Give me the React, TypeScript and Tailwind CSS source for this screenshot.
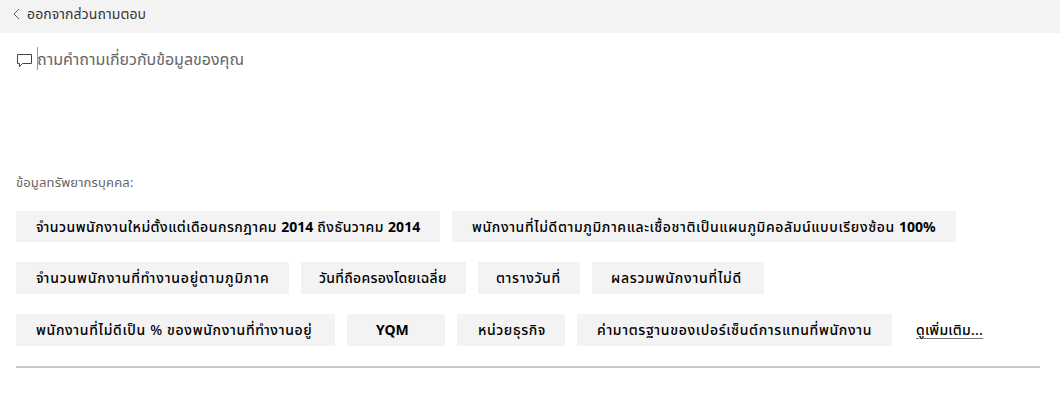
type ChipData = { label: string; box: string };

const rows: { height: string; chips: ChipData[] }[] = [
  {
    height: 'h-[31px] mb-5',
    chips: [
      { label: 'จำนวนพนักงานใหม่ตั้งแต่เดือนกรกฎาคม 2014 ถึงธันวาคม 2014', box: 'w-[424px] pl-5 tracking-[0.48px]' },
      { label: 'พนักงานที่ไม่ดีตามภูมิภาคและเชื้อชาติเป็นแผนภูมิคอลัมน์แบบเรียงซ้อน 100%', box: 'w-[504px] pl-5 tracking-[0.61px]' },
    ],
  },
  {
    height: 'h-8 mb-5',
    chips: [
      { label: 'จำนวนพนักงานที่ทำงานอยู่ตามภูมิภาค', box: 'w-[273px] pb-0.5 pl-5 tracking-[0.83px]' },
      { label: 'วันที่ถือครองโดยเฉลี่ย', box: 'w-[165px] pb-0.5 pl-[18px] tracking-[0.28px]' },
      { label: 'ตารางวันที่', box: 'w-[102px] pb-0.5 pl-[18px] tracking-[0.65px]' },
      { label: 'ผลรวมพนักงานที่ไม่ดี', box: 'w-[172px] pb-0.5 pl-[19px] tracking-[0.75px]' },
    ],
  },
  {
    height: 'h-8',
    chips: [
      { label: 'พนักงานที่ไม่ดีเป็น % ของพนักงานที่ทำงานอยู่', box: 'w-[319px] pb-0.5 pl-5 tracking-[0.66px]' },
      { label: 'YQM', box: 'w-[98px] pb-0.5 pl-[29px]' },
      { label: 'หน่วยธุรกิจ', box: 'w-[108px] pb-0.5 pl-[21px] tracking-[0.6px]' },
      { label: 'ค่ามาตรฐานของเปอร์เซ็นต์การแทนที่พนักงาน', box: 'w-[315px] pb-0.5 pl-5 tracking-[0.66px]' },
    ],
  },
];

function Chip({ label, box }: ChipData) {
  const parts = label.split(/(2014|100%|YQM)/);
  return (
    <button className={`flex shrink-0 items-center bg-[#f3f3f3] text-left whitespace-pre ${box}`}>
      <span>
        {parts.map((part, i) => (i % 2 ? <b key={i} className="font-bold tracking-normal">{part}</b> : part))}
      </span>
    </button>
  );
}

export default function App() {
  return (
    <div className="h-[400px] w-[1060px] overflow-hidden bg-white font-['Noto_Sans','Noto_Sans_Thai',sans-serif]">
      <header className="flex h-[33px] items-center bg-[#f3f3f3] pb-1.5 pl-3 text-[14px] text-[#333]">
        <svg className="mr-[7px] h-3 w-2" viewBox="0 0 8 12" fill="none" stroke="#666">
          <path d="M7 1 2 6l5 5" />
        </svg>
        <span className="whitespace-nowrap tracking-[0.1px]">ออกจากส่วนถามตอบ</span>
      </header>
      <main className="pl-4">
        <div className="flex h-[53px] items-center text-[16px] text-[#666]">
          <svg className="mt-[3px] h-4 w-[17px]" viewBox="0 0 17 16" fill="none" stroke="#444">
            <path d="M1.500 1.500h14v9H6.500l-3 3v-3h-2z" />
          </svg>
          <span className="ml-1 mb-0.5 h-[23px] w-px bg-[#999]" />
          <span className="-ml-px whitespace-nowrap pb-0.5">ถามคำถามเกี่ยวกับข้อมูลของคุณ</span>
        </div>
        <div className="mt-[87px] flex h-[18px] items-center pt-px text-[13px] tracking-[0.15px] text-[#666]">
          <span className="whitespace-nowrap">ข้อมูลทรัพยากรบุคคล:</span>
        </div>
        <div className="mt-5 text-[14px] font-medium text-black">
          {rows.map((row, i) => (
            <div key={i} className={`flex gap-3 ${row.height}`}>
              {row.chips.map((chip) => (
                <Chip key={chip.label} {...chip} />
              ))}
              {i === 2 && (
                <a className="ml-3 self-center whitespace-nowrap pb-0.5 tracking-[0.25px] underline decoration-[#777] decoration-1 underline-offset-[3px]">
                  ดูเพิ่มเติม...
                </a>
              )}
            </div>
          ))}
        </div>
        <div className="mt-5 h-0.5 w-[1024px] bg-[#c8c8c8]" />
      </main>
    </div>
  );
}
